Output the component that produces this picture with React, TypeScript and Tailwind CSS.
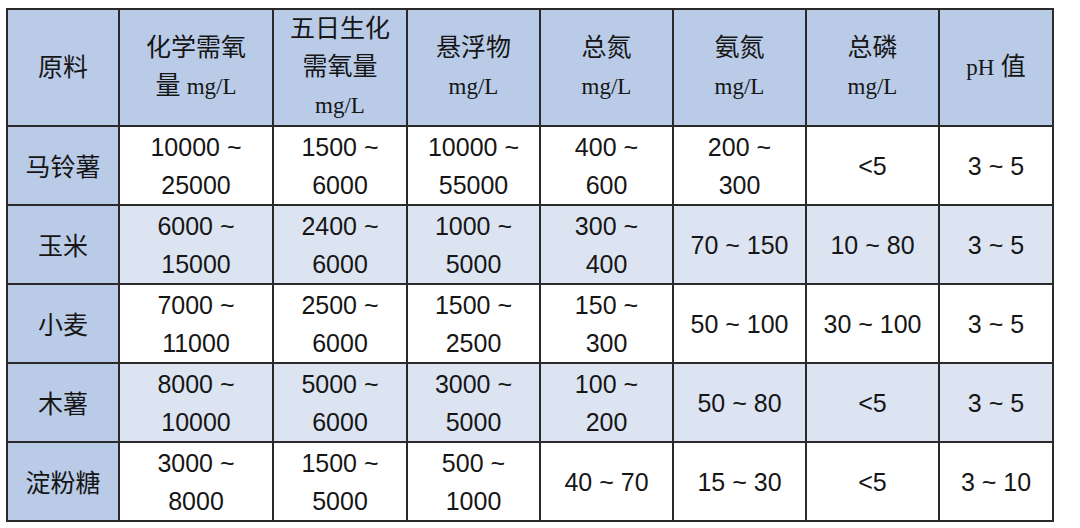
import React from 'react';

const cjk = "font-['Liberation_Serif','Noto_Sans_CJK_SC',serif]";

const U = ({ children }: { children: React.ReactNode }) => <span className="text-[23px]">{children}</span>;

const headers: React.ReactNode[] = [
  <>原料</>,
  <>化学需氧<br />量 <U>mg/L</U></>,
  <>五日生化<br />需氧量<br /><U>mg/L</U></>,
  <>悬浮物<br /><U>mg/L</U></>,
  <>总氮<br /><U>mg/L</U></>,
  <>氨氮<br /><U>mg/L</U></>,
  <>总磷<br /><U>mg/L</U></>,
  <><U>pH</U> 值</>,
];

const rows: { name: string; cells: string[][] }[] = [
  { name: '马铃薯', cells: [['10000 ~', '25000'], ['1500 ~', '6000'], ['10000 ~', '55000'], ['400 ~', '600'], ['200 ~', '300'], ['<5'], ['3 ~ 5']] },
  { name: '玉米', cells: [['6000 ~', '15000'], ['2400 ~', '6000'], ['1000 ~', '5000'], ['300 ~', '400'], ['70 ~ 150'], ['10 ~ 80'], ['3 ~ 5']] },
  { name: '小麦', cells: [['7000 ~', '11000'], ['2500 ~', '6000'], ['1500 ~', '2500'], ['150 ~', '300'], ['50 ~ 100'], ['30 ~ 100'], ['3 ~ 5']] },
  { name: '木薯', cells: [['8000 ~', '10000'], ['5000 ~', '6000'], ['3000 ~', '5000'], ['100 ~', '200'], ['50 ~ 80'], ['<5'], ['3 ~ 5']] },
  { name: '淀粉糖', cells: [['3000 ~', '8000'], ['1500 ~', '5000'], ['500 ~', '1000'], ['40 ~ 70'], ['15 ~ 30'], ['<5'], ['3 ~ 10']] },
];

const widths = ['w-[112px]', 'w-[154px]', 'w-[134px]', 'w-[133px]', 'w-[133px]', 'w-[133px]', 'w-[133px]', 'w-[114px]'];

export default function App() {
  return (
    <div className="w-[1080px] h-[528px] bg-white pt-[8px] pl-[6px]">
      <table className="border-collapse table-fixed w-[1046px] text-[#161616]">
        <colgroup>
          {widths.map((w, i) => (
            <col key={i} className={w} />
          ))}
        </colgroup>
        <thead>
          <tr className="h-[117px] bg-[#b9cbe7]">
            {headers.map((h, i) => (
              <th
                key={i}
                className={`border-2 border-[#2a2a2a] font-normal text-center align-middle text-[25px] leading-[38px] ${cjk}`}
              >
                {h}
              </th>
            ))}
          </tr>
        </thead>
        <tbody>
          {rows.map((r, ri) => (
            <tr key={r.name} className={`h-[79px] ${ri % 2 === 1 ? 'bg-[#dce4f2]' : 'bg-white'}`}>
              <td className="border-2 border-[#2a2a2a] bg-[#b9cbe7] text-center align-middle text-[25px] font-['Noto_Sans_CJK_SC',sans-serif]">
                {r.name}
              </td>
              {r.cells.map((c, ci) => (
                <td
                  key={ci}
                  className="border-2 border-[#2a2a2a] text-center align-middle text-[25px] leading-[38px] font-['Liberation_Sans',Arial,sans-serif]"
                >
                  {c.map((line, li) => (
                    <div key={li}>{line}</div>
                  ))}
                </td>
              ))}
            </tr>
          ))}
        </tbody>
      </table>
    </div>
  );
}
